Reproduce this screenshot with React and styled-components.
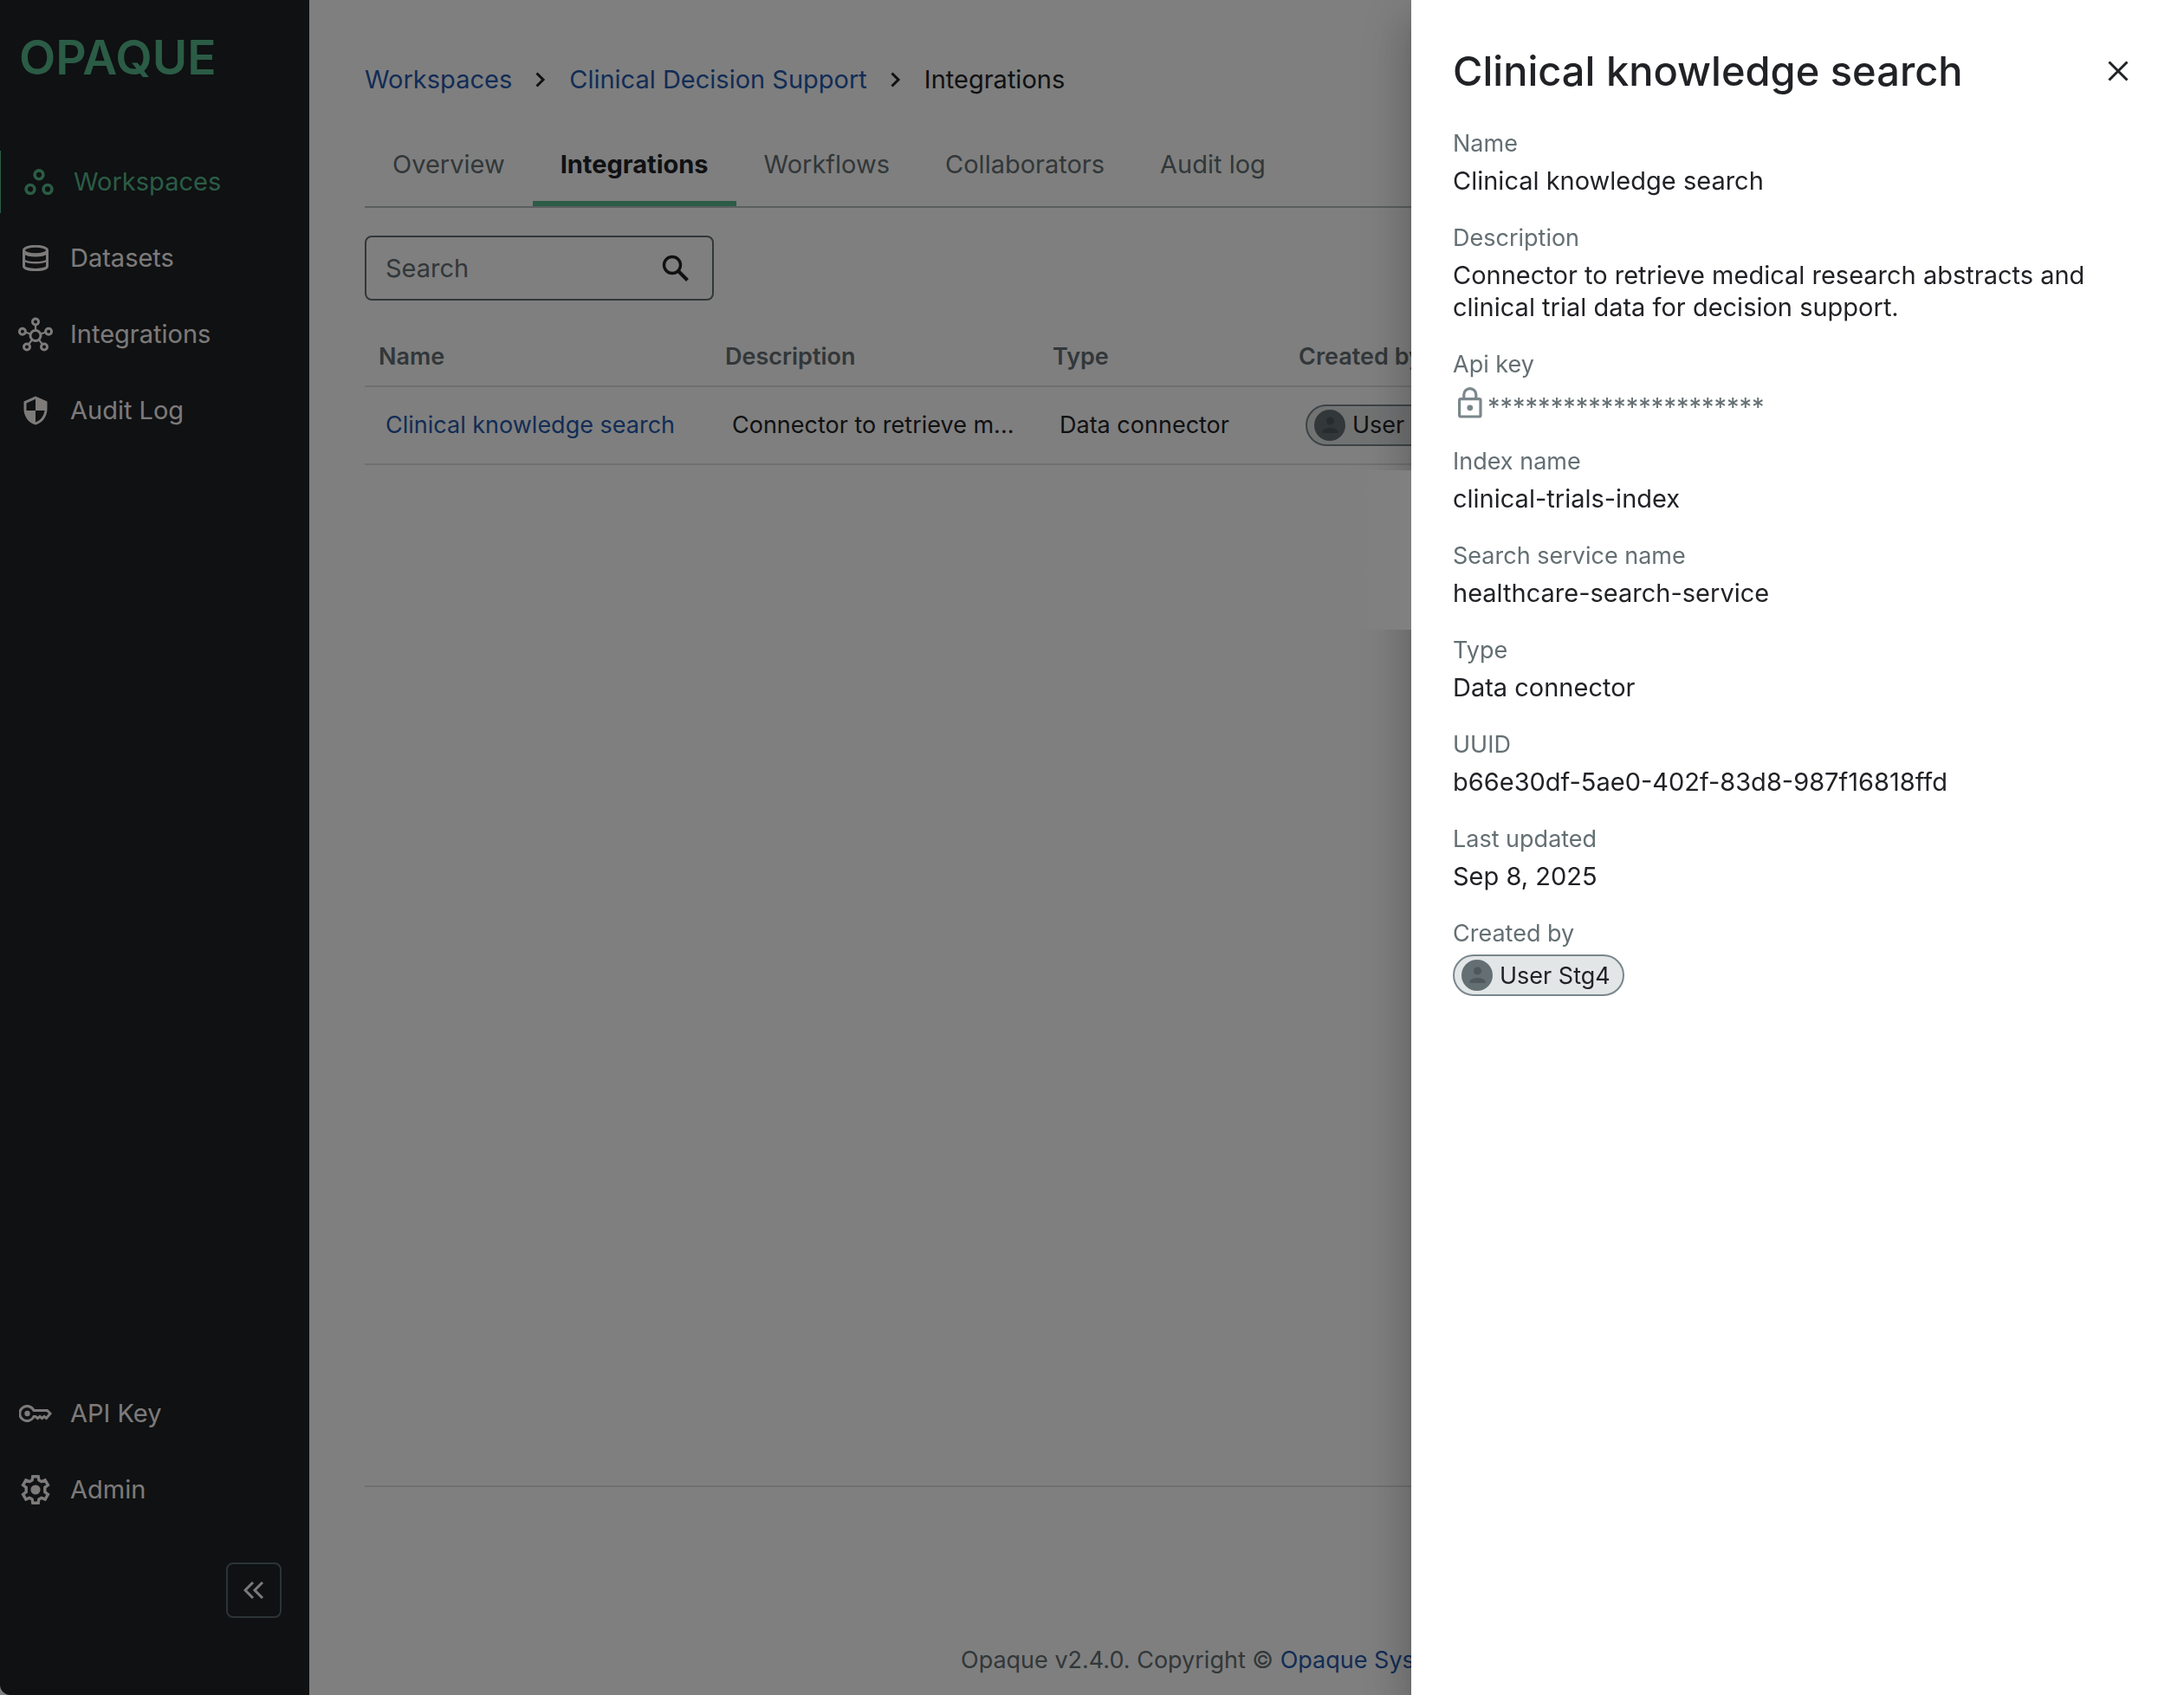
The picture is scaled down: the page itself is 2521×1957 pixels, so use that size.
import React, { useState } from "react";
import styled, { createGlobalStyle, ThemeProvider } from "styled-components";
import { MdSecurity } from "react-icons/md";

const theme = {
  color: {
    dark: "#1e2225",
    text: "#212226",
    muted: "#646f73",
    icon: "#7a878c",
    link: "#2458ac",
    green: "#56b88c",
    navText: "#fbf5f5",
    line: "#e0e0e0",
    tabLine: "#b4bcbc",
    chip: "#e2e6e7",
  },
};

const navItems = [
  { key: "workspaces", label: "Workspaces", icon: <WorkspacesIcon />, active: true },
  { key: "datasets", label: "Datasets", icon: <DatasetsIcon /> },
  { key: "integrations", label: "Integrations", icon: <HubIcon /> },
  { key: "audit", label: "Audit Log", icon: <MdSecurity size={36} /> },
];

const bottomItems = [
  { key: "api", label: "API Key", icon: <KeyIcon /> },
  { key: "admin", label: "Admin", icon: <GearIcon /> },
];

const tabs = ["Overview", "Integrations", "Workflows", "Collaborators", "Audit log"];

const integration = {
  name: "Clinical knowledge search",
  description:
    "Connector to retrieve medical research abstracts and clinical trial data for decision support.",
  type: "Data connector",
  user: "User Stg4",
};

const shorten = (text, length) => (text.length > length ? `${text.slice(0, length)}...` : text);

export default function App() {
  const [tab, setTab] = useState("Integrations");
  const [search, setSearch] = useState("");
  const [open, setOpen] = useState(true);

  return (
    <ThemeProvider theme={theme}>
      <GlobalStyle />
      <Layout>
        <Sidebar />
        <Main>
          <Breadcrumbs aria-label="Breadcrumb">
            <a href="#workspaces">Workspaces</a>
            <ChevronIcon />
            <a href="#clinical">Clinical Decision Support</a>
            <ChevronIcon />
            <span>Integrations</span>
          </Breadcrumbs>
          <Tabs role="tablist">
            {tabs.map(name => (
              <Tab
                key={name}
                role="tab"
                aria-selected={name === tab}
                $active={name === tab}
                onClick={() => setTab(name)}
              >
                {name}
              </Tab>
            ))}
          </Tabs>
          <SearchBox>
            <input
              aria-label="Search"
              placeholder="Search"
              value={search}
              onChange={e => setSearch(e.target.value)}
            />
            <SearchIcon />
          </SearchBox>
          <IntegrationTable onSelect={() => setOpen(true)} />
          <Footer>
            <p>
              Opaque v2.4.0. Copyright © <a href="#opaque">Opaque Systems</a> 2025
            </p>
          </Footer>
        </Main>
      </Layout>
      {open && (
        <>
          <Backdrop onClick={() => setOpen(false)} />
          <DetailDrawer onClose={() => setOpen(false)} />
        </>
      )}
    </ThemeProvider>
  );
}

function Sidebar() {
  return (
    <SidebarContainer>
      <Logo href="#home">OPAQUE</Logo>
      <NavList>
        {navItems.map(item => (
          <NavLink key={item.key} item={item} />
        ))}
      </NavList>
      <Spacer />
      <NavList>
        {bottomItems.map(item => (
          <NavLink key={item.key} item={item} />
        ))}
      </NavList>
      <CollapseButton aria-label="Collapse sidebar">
        <svg width="24" height="20" viewBox="0 0 24 20" fill="none" stroke="currentColor" strokeWidth="3">
          <path d="M11 1L2 10l9 9M22 1l-9 9 9 9" />
        </svg>
      </CollapseButton>
    </SidebarContainer>
  );
}

function NavLink({ item }) {
  return (
    <NavAnchor href={`#${item.key}`} $active={item.active}>
      <NavIcon>{item.icon}</NavIcon>
      {item.label}
    </NavAnchor>
  );
}

function IntegrationTable({ onSelect }) {
  return (
    <Table>
      <colgroup>
        <col className="name" />
        <col className="description" />
        <col className="type" />
        <col />
      </colgroup>
      <thead>
        <tr>
          <th>Name</th>
          <th>Description</th>
          <th>Type</th>
          <th>Created by</th>
        </tr>
      </thead>
      <tbody>
        <tr>
          <td>
            <a href="#integration" onClick={onSelect}>
              {integration.name}
            </a>
          </td>
          <td title={integration.description}>{shorten(integration.description, 23)}</td>
          <td>{integration.type}</td>
          <td>
            <UserChip name={integration.user} />
          </td>
        </tr>
      </tbody>
    </Table>
  );
}

function DetailDrawer({ onClose }) {
  return (
    <Drawer role="dialog" aria-labelledby="drawer-title">
      <DrawerHeader>
        <h2 id="drawer-title">{integration.name}</h2>
        <button aria-label="Close" onClick={onClose}>
          <svg width="24" height="24" viewBox="0 0 24 24" fill="none" stroke="currentColor" strokeWidth="3">
            <path d="M1.5 1.5l21 21M22.5 1.5l-21 21" />
          </svg>
        </button>
      </DrawerHeader>
      <Fields>
        <Field label="Name">{integration.name}</Field>
        <Field label="Description">{integration.description}</Field>
        <Field label="Api key">
          <Secret>
            <LockIcon />
            <span>**********************</span>
          </Secret>
        </Field>
        <Field label="Index name">clinical-trials-index</Field>
        <Field label="Search service name">healthcare-search-service</Field>
        <Field label="Type">{integration.type}</Field>
        <Field label="UUID">b66e30df-5ae0-402f-83d8-987f16818ffd</Field>
        <Field label="Last updated">Sep 8, 2025</Field>
        <Field label="Created by">
          <UserChip name={integration.user} />
        </Field>
      </Fields>
    </Drawer>
  );
}

function Field({ label, children }) {
  return (
    <FieldItem>
      <dt>{label}</dt>
      <dd>{children}</dd>
    </FieldItem>
  );
}

function UserChip({ name }) {
  return (
    <Chip>
      <svg width="36" height="36" viewBox="0 0 36 36">
        <circle cx="18" cy="18" r="18" fill="#646f73" />
        <circle cx="18.500" cy="13" r="4.500" fill="#4f585b" />
        <path d="M9.500 27v-1.500c0-3 5-4.500 9-4.500s9 1.500 9 4.500V27z" fill="#4f585b" />
      </svg>
      {name}
    </Chip>
  );
}

/* icons */

function WorkspacesIcon() {
  return (
    <svg width="34" height="30" viewBox="0 0 34 30" fill="none" stroke="currentColor" strokeWidth="3.6">
      <circle cx="17" cy="6.8" r="4.9" />
      <circle cx="7" cy="23.4" r="4.9" />
      <circle cx="27" cy="23.4" r="4.9" />
    </svg>
  );
}

function DatasetsIcon() {
  return (
    <svg width="30" height="30" viewBox="0 0 30 30" fill="none" stroke="currentColor" strokeWidth="3">
      <ellipse cx="15" cy="6" rx="13.5" ry="4.7" />
      <path d="M1.5 6v18c0 2.800 5.500 4.500 13.500 4.500s13.500-1.700 13.500-4.500V6" />
      <path d="M1.5 9c3 2.200 7.500 3.300 13.500 3.300S25.500 11.200 28.500 9" strokeWidth="2.600" />
      <path d="M1.5 17.500c3 2 7.500 2.800 13.500 2.800s10.500-.8 13.500-2.800" strokeWidth="2.600" />
    </svg>
  );
}

function HubIcon() {
  return (
    <svg width="40" height="40" viewBox="0 0 40 40" fill="none" stroke="currentColor" strokeWidth="3">
      <path d="M20 9v6M8 17.500l6 2M32 17.500l-6 2M12 31.500l4-5M28 31.500l-4-5" strokeWidth="2.2" />
      <circle cx="20" cy="21.500" r="6" />
      <circle cx="20" cy="5.500" r="3.500" />
      <circle cx="4.900" cy="16.800" r="3.500" />
      <circle cx="35.100" cy="16.800" r="3.500" />
      <circle cx="10" cy="34.500" r="3.500" />
      <circle cx="30" cy="34.500" r="3.500" />
    </svg>
  );
}

function KeyIcon() {
  return (
    <svg width="38" height="20" viewBox="0 0 38 20" fill="none" stroke="currentColor" strokeWidth="3">
      <path d="M17 6.500A8.500 8.500 0 1 0 17 13.500h2l2.500 2 2.500-2 2.500 2 2.500-2 2.500 2L36 10l-3.500-3.500z" />
      <circle cx="9.500" cy="10" r="3.200" fill="currentColor" stroke="none" />
    </svg>
  );
}

function GearIcon() {
  return (
    <svg width="34" height="34" viewBox="0 0 34 34" fill="none" stroke="currentColor" strokeWidth="3.400">
      <path d="M13.800 1.700h6.400l.7 4.300 3 1.700 4.200-1.700 3.300 5.600-3.600 2.800v5.200l3.600 2.800-3.300 5.600-4.200-1.700-3 1.700-.7 4.300h-6.400l-.7-4.300-3-1.700L5.900 28l-3.300-5.600 3.600-2.800v-5.200l-3.600-2.800L5.900 6l4.200 1.700 3-1.700z" />
      <circle cx="17" cy="17" r="5.600" fill="currentColor" stroke="none" />
    </svg>
  );
}

function ChevronIcon() {
  return (
    <svg width="12" height="18" viewBox="0 0 12 18" fill="none" stroke="currentColor" strokeWidth="3">
      <path d="M1.500 1.500L9 9l-7.500 7.500" />
    </svg>
  );
}

function SearchIcon() {
  return (
    <svg width="32" height="32" viewBox="0 0 32 32" fill="none" stroke="currentColor" strokeWidth="3.400">
      <circle cx="12" cy="12" r="9.500" />
      <path d="M18.500 18.500L29.500 29.500" strokeWidth="4" />
    </svg>
  );
}

function LockIcon() {
  return (
    <svg width="28" height="36" viewBox="0 0 28 36" fill="none" stroke="currentColor" strokeWidth="3.200">
      <rect x="1.600" y="13.600" width="24.400" height="20.400" rx="1.500" />
      <path d="M6.800 13V8.600a7 7 0 0 1 14 0V13" />
      <circle cx="13.800" cy="23.800" r="3.400" fill="currentColor" stroke="none" />
    </svg>
  );
}

const GlobalStyle = createGlobalStyle`
  * {
    box-sizing: border-box;
  }
  body {
    margin: 0;
    font-family: Inter, "Liberation Sans", sans-serif;
    font-size: 29px;
    line-height: 36px;
    color: ${theme.color.text};
    background-color: #fff;
  }
  a {
    color: ${theme.color.link};
    text-decoration: none;
  }
  button, input {
    font: inherit;
    color: inherit;
    border: none;
    padding: 0;
    background: transparent;
  }
  svg {
    display: block;
    flex-shrink: 0;
  }
`;

const Layout = styled.div`
  display: flex;
  min-height: 100vh;
`;

const SidebarContainer = styled.aside`
  display: flex;
  flex-direction: column;
  flex-shrink: 0;
  width: 357px;
  padding: 34px 0 89px;
  border-bottom-left-radius: 12px;
  background-color: ${({ theme }) => theme.color.dark};
`;

const Logo = styled.a`
  margin: 0 0 76px 22px;
  font-size: 55px;
  font-weight: 600;
  line-height: 64px;
  color: ${({ theme }) => theme.color.green};
`;

const NavList = styled.nav`
  display: flex;
  flex-direction: column;
  gap: 16px;
`;

const NavAnchor = styled.a`
  display: flex;
  align-items: center;
  gap: 20px;
  height: 72px;
  padding-left: ${({ $active }) => ($active ? "24px" : "21px")};
  border-left: ${({ $active }) => ($active ? "1px solid" : "none")};
  color: ${({ theme, $active }) => ($active ? theme.color.green : theme.color.navText)};
`;

const NavIcon = styled.span`
  display: flex;
  justify-content: center;
  width: 40px;
`;

const Spacer = styled.div`
  flex: 1;
`;

const CollapseButton = styled.button`
  display: flex;
  align-items: center;
  justify-content: center;
  align-self: flex-end;
  width: 64px;
  height: 64px;
  margin: 48px 32px 0 0;
  border: 2px solid #58686a;
  border-radius: 8px;
  color: ${({ theme }) => theme.color.navText};
`;

const Main = styled.main`
  display: flex;
  flex-direction: column;
  flex: 1;
  min-width: 0;
  padding: 74px 64px 22px;
`;

const Breadcrumbs = styled.nav`
  display: flex;
  align-items: center;
  gap: 27px;
`;

const Tabs = styled.div`
  display: flex;
  margin-top: 30px;
  border-bottom: 2px solid ${({ theme }) => theme.color.tabLine};
`;

const Tab = styled.button`
  height: 98px;
  padding: 8px 32px 0;
  border-bottom: 6px solid ${({ theme, $active }) => ($active ? theme.color.green : "transparent")};
  font-weight: ${({ $active }) => ($active ? 700 : 400)};
  color: ${({ theme, $active }) => ($active ? theme.color.text : theme.color.muted)};
`;

const SearchBox = styled.label`
  display: flex;
  align-items: center;
  justify-content: space-between;
  width: 403px;
  height: 75px;
  margin-top: 32px;
  padding: 0 26px 0 22px;
  border: 2px solid ${({ theme }) => theme.color.muted};
  border-radius: 8px;
  input {
    flex: 1;
    min-width: 0;
    outline: none;
  }
  input::placeholder {
    color: ${({ theme }) => theme.color.muted};
    opacity: 1;
  }
`;

const Table = styled.table`
  width: 100%;
  margin: 26px 0 auto;
  table-layout: fixed;
  border-collapse: collapse;
  font-size: 27px;
  text-align: left;
  .name {
    width: 400px;
  }
  .description {
    width: 378px;
  }
  .type {
    width: 284px;
  }
  th {
    height: 73px;
    padding: 6px 16px 0;
    border-bottom: 2px solid ${({ theme }) => theme.color.line};
    font-weight: 600;
    color: ${({ theme }) => theme.color.muted};
  }
  td {
    height: 90px;
    padding: 0 24px;
    border-bottom: 2px solid ${({ theme }) => theme.color.line};
    white-space: nowrap;
  }
`;

const Chip = styled.span`
  display: inline-flex;
  align-items: center;
  gap: 8px;
  height: 48px;
  padding: 0 14px 0 8px;
  border: 2px solid ${({ theme }) => theme.color.icon};
  border-radius: 24px;
  vertical-align: middle;
  font-size: 27px;
  background-color: ${({ theme }) => theme.color.chip};
`;

const Footer = styled.footer`
  display: flex;
  align-items: flex-end;
  justify-content: center;
  height: 220px;
  border-top: 2px solid ${({ theme }) => theme.color.line};
  font-size: 27px;
  color: ${({ theme }) => theme.color.muted};
  p {
    margin: 0;
  }
`;

const Backdrop = styled.div`
  position: fixed;
  inset: 0;
  background-color: rgba(0, 0, 0, 0.5);
`;

const Drawer = styled.section`
  position: fixed;
  top: 0;
  right: 0;
  bottom: 0;
  width: 892px;
  max-width: 100vw;
  padding: 48px;
  background-color: #fff;
  box-shadow: 0 16px 20px -10px rgba(0, 0, 0, 0.2), 0 32px 48px 4px rgba(0, 0, 0, 0.14),
    0 12px 60px 10px rgba(0, 0, 0, 0.12);

  /* flat strip that interrupts the shadow under the first row */
  &::before {
    content: "";
    position: absolute;
    top: 543px;
    right: 100%;
    width: 80px;
    height: 184px;
    background: linear-gradient(to left, #808080 50px, transparent);
  }
`;

const DrawerHeader = styled.header`
  display: flex;
  align-items: center;
  justify-content: space-between;
  height: 67px;
  margin-bottom: 34px;
  h2 {
    margin: 0;
    font-size: 47px;
    font-weight: 500;
    line-height: 58px;
  }
  button {
    padding: 16px;
  }
`;

const Fields = styled.dl`
  display: flex;
  flex-direction: column;
  gap: 31px;
  margin: 0;
`;

const FieldItem = styled.div`
  dt {
    margin-bottom: 7px;
    font-size: 27px;
    line-height: 34px;
    color: ${({ theme }) => theme.color.muted};
  }
  dd {
    margin: 0;
    line-height: 37px;
  }
`;

const Secret = styled.span`
  display: flex;
  align-items: center;
  gap: 6px;
  height: 40px;
  padding-left: 6px;
  color: ${({ theme }) => theme.color.icon};
  span {
    padding-top: 8px;
    color: ${({ theme }) => theme.color.muted};
  }
`;
